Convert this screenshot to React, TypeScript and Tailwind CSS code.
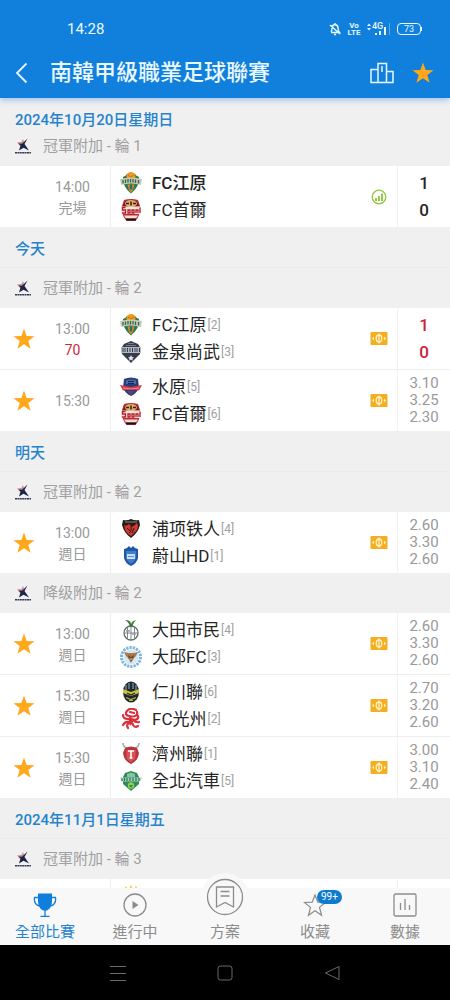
import type { ReactNode } from 'react'
import { useState } from 'react'
import clsx from 'clsx'

type CrestId =
  | 'gangwon'
  | 'seoul'
  | 'gimcheon'
  | 'suwon'
  | 'pohang'
  | 'ulsan'
  | 'daejeon'
  | 'daegu'
  | 'incheon'
  | 'gwangju'
  | 'jeju'
  | 'jeonbuk'
  | 'stars'

interface Team {
  crest: CrestId
  name?: string
  rank?: number
  winner?: boolean
}

interface Match {
  id: number
  time?: string
  status?: string
  live?: boolean
  starred?: boolean
  indicator?: 'stats' | 'odds'
  teams: Team[]
  score?: number[]
  odds?: string[]
}

interface Group {
  date?: string
  league: string
  collapsed?: boolean
  matches: Match[]
}

const groups: Group[] = [
  {
    date: '2024年10月20日星期日',
    league: '冠軍附加 - 輪 1',
    collapsed: true,
    matches: [
      {
        id: 1,
        time: '14:00',
        status: '完場',
        indicator: 'stats',
        teams: [
          { crest: 'gangwon', name: 'FC江原', winner: true },
          { crest: 'seoul', name: 'FC首爾' },
        ],
        score: [1, 0],
      },
    ],
  },
  {
    date: '今天',
    league: '冠軍附加 - 輪 2',
    matches: [
      {
        id: 2,
        time: '13:00',
        status: '70',
        live: true,
        starred: true,
        indicator: 'odds',
        teams: [
          { crest: 'gangwon', name: 'FC江原', rank: 2 },
          { crest: 'gimcheon', name: '金泉尚武', rank: 3 },
        ],
        score: [1, 0],
      },
      {
        id: 3,
        time: '15:30',
        starred: true,
        indicator: 'odds',
        teams: [
          { crest: 'suwon', name: '水原', rank: 5 },
          { crest: 'seoul', name: 'FC首爾', rank: 6 },
        ],
        odds: ['3.10', '3.25', '2.30'],
      },
    ],
  },
  {
    date: '明天',
    league: '冠軍附加 - 輪 2',
    matches: [
      {
        id: 4,
        time: '13:00',
        status: '週日',
        starred: true,
        indicator: 'odds',
        teams: [
          { crest: 'pohang', name: '浦项铁人', rank: 4 },
          { crest: 'ulsan', name: '蔚山HD', rank: 1 },
        ],
        odds: ['2.60', '3.30', '2.60'],
      },
    ],
  },
  {
    league: '降级附加 - 輪 2',
    matches: [
      {
        id: 5,
        time: '13:00',
        status: '週日',
        starred: true,
        indicator: 'odds',
        teams: [
          { crest: 'daejeon', name: '大田市民', rank: 4 },
          { crest: 'daegu', name: '大邱FC', rank: 3 },
        ],
        odds: ['2.60', '3.30', '2.60'],
      },
      {
        id: 6,
        time: '15:30',
        status: '週日',
        starred: true,
        indicator: 'odds',
        teams: [
          { crest: 'incheon', name: '仁川聯', rank: 6 },
          { crest: 'gwangju', name: 'FC光州', rank: 2 },
        ],
        odds: ['2.70', '3.20', '2.60'],
      },
      {
        id: 7,
        time: '15:30',
        status: '週日',
        starred: true,
        indicator: 'odds',
        teams: [
          { crest: 'jeju', name: '濟州聯', rank: 1 },
          { crest: 'jeonbuk', name: '全北汽車', rank: 5 },
        ],
        odds: ['3.00', '3.10', '2.40'],
      },
    ],
  },
  {
    date: '2024年11月1日星期五',
    league: '冠軍附加 - 輪 3',
    matches: [{ id: 8, teams: [{ crest: 'stars' }] }],
  },
]

const crests: Record<CrestId, ReactNode> = {
  gangwon: (
    <>
      <path d="M3 5 Q6 4 7 2 Q11 0 15 2 Q16 4 19 5 Q20 14 11 21.500 Q2 14 3 5Z" fill="#2c7a4b" />
      <circle cx="11" cy="4.500" r="4.500" fill="#f29a1f" />
      <path d="M8 3 L11 5 L14 3 M11 5 V8" stroke="#b96a12" strokeWidth=".8" fill="none" />
      <path d="M0 7 Q11 4 22 7 L21 13 Q11 10 1 13Z" fill="#c3cdb6" />
      <path d="M3 8v3.500M5.500 7.500v3.500M8 7v3.500M10.500 7v3.500M13 7v3.500M15.500 7.500v3.500M18.500 8v3.500" stroke="#33664b" strokeWidth="1.300" />
      <path d="M7.500 12.500h7l-1.500 5.500-2 2.500-2-2.500Z" fill="#e08b2a" />
      <path d="M11 12.500v5" stroke="#2c6a6b" strokeWidth="2.500" />
    </>
  ),
  seoul: (
    <>
      <path d="M4 1 Q11 -1 18 1 L20 7 L20 13 Q18 20 15 22 H7 Q4 20 2 13 L2 7Z" fill="#c22a33" />
      <path d="M3 7Q4 1 11 1T19 7Z" fill="#5b2a1c" />
      <ellipse cx="11" cy="4.500" rx="6" ry="3.500" fill="#dcae68" />
      <path d="M6 4.500h3M13 4.500h3M11 2.500v4" stroke="#3a1c12" strokeWidth="1.500" />
      <path d="M1 7.500H21V15H1Z" fill="#f6e0d9" />
      <path d="M5.500 8.500h-3v2.500h3V14H2M8 11h2v3H8zM12 11h2v3h-2zM16 14v-3h2v3M20 8.500V14" stroke="#b3202c" strokeWidth="1.300" fill="none" />
      <path d="M4 16.500H18L16 19.500H6Z" fill="#f2ded5" />
      <path d="M6 20.500H16" stroke="#1d1011" strokeWidth="2" />
    </>
  ),
  gimcheon: (
    <>
      <path d="M4 3 L11 0 L18 3 L20 6 V13 L11 22 L2 13 V6Z" fill="#363c4a" />
      <path d="M6 4.500h10M8 2.500h6" stroke="#767e8c" strokeWidth="1" />
      <path d="M1 6H21V12H1Z" fill="#b3b9c2" />
      <path d="M3 7v4M5 7v4M7.500 7v4M10 7v4M12.500 7v4M15 7v4M17 7v4M19.500 7v4" stroke="#363c4a" strokeWidth="1" />
      <path d="M11 14l1 2 2 .3-1.500 1.500.4 2-1.900-1-1.900 1 .4-2L8 16.300l2-.3Z" fill="#dfe3e8" />
    </>
  ),
  suwon: (
    <>
      <path d="M4 3 Q11 0 18 3 L19 12 Q16 18 11 20 Q6 18 3 12Z" fill="#263f78" />
      <path d="M6 4.500Q11 2.500 16 4.500V8H6Z" fill="#4c6aa5" />
      <path d="M8 5.500h6M8 7.500h6" stroke="#172750" strokeWidth="1" />
      <path d="M0 9 L11 11 L22 9 L19 14.500 L11 13.500 L3 14.500Z" fill="#d7374c" />
      <path d="M3 12l8 1 8-1" stroke="#f6a4ad" strokeWidth=".8" fill="none" />
      <path d="M7 15h8l-4 4Z" fill="#6d3f66" />
    </>
  ),
  pohang: (
    <>
      <path d="M3 2 Q7 3 11 1 Q15 3 19 2 L20 7 Q18 15 11 20 Q4 15 2 7Z" fill="#241d1d" />
      <path d="M4 7 Q6 9 9 6 L12 9 L17 5 Q19 8 17 12 L11 18 Q5 15 4 7Z" fill="#d8372c" />
      <path d="M15 7Q10 6 11 10T9 15M7 10l3 3M14 10l-2 5" stroke="#241d1d" strokeWidth="1" fill="none" />
      <path d="M5 4h12" stroke="#a98" strokeWidth=".9" />
    </>
  ),
  ulsan: (
    <>
      <path d="M4 4 L7 3 L9 1 L11 3 L13 1 L15 3 L18 4 V13 Q17 18 11 21 Q5 18 4 13Z" fill="#2257a7" />
      <path d="M6 6H16V13Q15 16 11 19Q7 16 6 13Z" fill="#3f7ecb" />
      <path d="M7 9h8v5H7Z" fill="#c9dcf1" />
      <path d="M8 11.500h6" stroke="#5f90cd" strokeWidth="1" />
    </>
  ),
  daejeon: (
    <>
      <circle cx="11" cy="14" r="7" fill="#fff" stroke="#5d6f6a" strokeWidth="1.300" />
      <path d="M4.500 14h13M11 7v14M7.500 8.500v11M14.500 8.500v11" stroke="#6b7f86" strokeWidth=".9" />
      <path d="M6 12h4M12 15h4" stroke="#b98ea5" strokeWidth="1.500" />
      <path d="M10 8 Q9 3 5 1 Q11 1 11 5 Q12 2 16 1 Q13 4 12 8Z" fill="#3f7a34" />
    </>
  ),
  daegu: (
    <>
      <circle cx="11" cy="11" r="9.500" fill="none" stroke="#7fb4dc" strokeWidth="3" strokeDasharray="2.300 1" />
      <circle cx="11" cy="11" r="7.500" fill="#d3e7f4" />
      <path d="M4 6 L8 7 H14 L18 6 L16 10 L14 12 L11 17 L8 12 L6 10Z" fill="#a67a4c" />
      <path d="M8 9l3 2 3-2-1 4-2 2-2-2Z" fill="#6a4c31" />
      <path d="M9.500 13h3" stroke="#e8d4ae" strokeWidth="1" />
    </>
  ),
  incheon: (
    <>
      <ellipse cx="11" cy="11" rx="8" ry="10.500" fill="#23282a" />
      <path d="M6 4v5M9 2v6M13 2v6M16 4v5" stroke="#70a2b5" strokeWidth="1.200" />
      <path d="M3 8 L11 11 L19 8 V12 L11 15 L3 12Z" fill="#c9c43b" />
      <path d="M7 12l4 2 4-2" stroke="#23282a" strokeWidth="1.200" fill="none" />
      <path d="M6 16.500l5 2 5-2M9 19.500h4" stroke="#aeb546" strokeWidth="1.200" fill="none" />
    </>
  ),
  gwangju: (
    <>
      <path
        d="M16 2Q10-1 7 3Q4 7 9 8T15 8Q18 7 17 4M3 7Q3 11 8 11T15 12Q19 11 18 8M3 17Q5 13 9 14T13 17Q15 20 18 18M8 20Q6 17 9 15M19 14Q16 15 13 12M10 4l4 1"
        fill="none"
        stroke="#d9303c"
        strokeWidth="2.200"
        strokeLinecap="round"
      />
      <path d="M9 8Q13 9 13 14L10 18Q8 13 9 8Z" fill="#d9303c" />
    </>
  ),
  jeju: (
    <>
      <path d="M3 0 Q3 4 7 5 M19 0 Q19 4 15 5" stroke="#a7a9a9" strokeWidth="1.600" fill="none" />
      <path d="M5 5 Q11 2 17 5 L19 10 Q18 18 11 21 Q4 18 3 10Z" fill="#b9353b" />
      <path d="M6 7 H16 L15 16 L11 19 L7 16Z" fill="#d75357" />
      <path d="M8 8h6M11 8v7M9.500 15h3" stroke="#fff" strokeWidth="1.600" />
    </>
  ),
  jeonbuk: (
    <>
      <path d="M5 3 L11 1 L17 3 L19 7 V14 L11 21 L3 14 V7Z" fill="#2d8c59" />
      <path d="M7 4l4-1.500L15 4v3H7Z" fill="#83c4a1" />
      <path d="M0 7.500H22L20 11.500H2Z" fill="#a9d0bb" />
      <path d="M2 8.500v2.500M4.500 8v3M7 8v3M10 8v3M13 8v3M16 8v3M19 8v3" stroke="#2d7a58" strokeWidth="1.300" />
      <circle cx="11" cy="15.500" r="3.200" fill="#8fce4d" />
      <path d="M9 15h4l-2 3Z" fill="#2d8c59" />
    </>
  ),
  stars: <path d="M5 4l1-2 1 2M10 3l1-2 1 2M15 4l1-2 1 2" stroke="#e9d45c" strokeWidth="1.200" fill="none" />,
}

function Crest({ id }: { id: CrestId }) {
  return (
    <svg viewBox="0 0 22 22" className="size-[22px] shrink-0" aria-hidden="true">
      {crests[id]}
    </svg>
  )
}

function StarIcon({ className }: { className?: string }) {
  return (
    <svg viewBox="0 0 20 20" className={className} aria-hidden="true">
      <path d="M10 0.500 L12.400 7.200 L19.600 7.400 L13.900 11.800 L16 18.800 L10 14.700 L4 18.800 L6.100 11.800 L0.400 7.400 L7.600 7.200Z" fill="currentColor" />
    </svg>
  )
}

function LeagueLogo() {
  return (
    <svg viewBox="0 0 16 16" className="size-4 shrink-0" aria-hidden="true">
      <path d="M2 4.500 L6.500 4 L8 1 L9 4 L7.500 7 L5 8Z" fill="#c4606b" opacity=".7" />
      <path d="M12.500 0.500 L9.500 6 L14 12.500 L8.500 9.800 L4 12.500 L5.500 7.500 L3.500 5.500 L7 5.800Z" fill="#1c2447" />
      <path d="M0 14.700H16" stroke="#323a5a" strokeWidth="1.400" strokeDasharray="2 .4" />
    </svg>
  )
}

function StatsIcon() {
  return (
    <svg viewBox="0 0 16 16" className="size-4" role="img" aria-label="統計">
      <circle cx="8" cy="8" r="6.800" fill="none" stroke="#92c83e" strokeWidth="1.300" />
      <path d="M5 12V9M8 12V7M11 12V4.500" stroke="#92c83e" strokeWidth="1.900" />
    </svg>
  )
}

function OddsIcon() {
  return (
    <svg viewBox="0 0 18 13" className="h-[13px] w-[18px]" role="img" aria-label="賠率">
      <rect x=".5" width="17" height="13" rx="1" fill="#f5ae1d" />
      <ellipse cx="9" cy="6.500" rx="2.800" ry="3.500" fill="none" stroke="#fff3cf" strokeWidth="1.300" />
      <path d="M9 1.500v10" stroke="#fff3cf" strokeWidth="1.200" />
      <path d="M4 4.500 L2 6.500 L4 8.500ZM14 4.500 L16 6.500 L14 8.500Z" fill="#fff3cf" />
    </svg>
  )
}

function StatusBar() {
  return (
    <div className="flex h-12 items-center justify-between pt-2.5 pr-7 pl-[67px]">
      <span className="text-[15px] leading-5">14:28</span>
      <div className="flex items-center gap-1.5">
        <svg viewBox="0 0 12 14" className="h-3.5 w-3" fill="none" stroke="currentColor" strokeWidth="1.400" aria-hidden="true">
          <path d="M2 10 Q3 9 3 6 Q3 3 6 2.500 Q9 3 9 6 Q9 9 10.500 10.500 H2M6 1v1.500M5 12.500h2M1 3l10 9" />
        </svg>
        <span className="flex w-3.5 flex-col items-center text-[8px] leading-[7px] font-bold">
          <span>Vo</span>
          <span>LTE</span>
        </span>
        <svg viewBox="0 0 24 14" className="h-3.5 w-6" fill="currentColor" aria-hidden="true">
          <path d="M0 4l2-2.500L4 4ZM0 6h4L2 8.500Z" />
          <text x="5" y="7" className="text-[9px] font-medium">4G</text>
          <path d="M8 11h2v2H8zM12 9h2v4h-2zM17 5h2v8h-2z" />
          <path d="M22 1h1v12h-1z" opacity=".35" />
        </svg>
        <span className="flex items-center">
          <span className="flex h-3 w-6 items-center justify-center rounded border border-current text-[9px] leading-3">73</span>
          <span className="h-1 w-px bg-current" />
        </span>
      </div>
    </div>
  )
}

function Header() {
  return (
    <header className="relative z-10 bg-[#1180dd] text-[#e9f7ff] shadow-[0_2px_6px_#1180dd66]">
      <StatusBar />
      <div className="flex h-[50px] items-center pr-4 pl-3.5">
        <button type="button" aria-label="返回" className="w-9">
          <svg viewBox="0 0 14 22" className="h-[22px] w-3.5" fill="none" stroke="currentColor" strokeWidth="1.800">
            <path d="M12.500 1.500 L3 11 L12.500 20.500" />
          </svg>
        </button>
        <h1 className="flex-1 text-[22px] leading-7 font-medium">南韓甲級職業足球聯賽</h1>
        <button type="button" aria-label="積分榜" className="mr-[18px]">
          <svg viewBox="0 0 24 22" className="h-[22px] w-6" fill="none" stroke="currentColor" strokeWidth="1.500">
            <path d="M8 20.500V1.500h8.500v19M8 7.500H1v13h22V9.500h-6.500M12 4v6" />
          </svg>
        </button>
        <button type="button" aria-label="收藏聯賽" className="text-[#ffa71a]">
          <StarIcon className="size-[22px]" />
        </button>
      </div>
    </header>
  )
}

function MatchRow({ match }: { match: Match }) {
  const [starred, setStarred] = useState(match.starred)

  return (
    <li className="flex h-[62px] items-stretch bg-white last:h-[61px]">
      <div className="flex w-12 items-center justify-center">
        {starred !== undefined && (
          <button
            type="button"
            aria-label="收藏"
            aria-pressed={starred}
            onClick={() => setStarred(!starred)}
            className={starred ? 'text-[#ffa81c]' : 'text-[#cccccc]'}
          >
            <StarIcon className="size-[22px]" />
          </button>
        )}
      </div>
      <div className="flex w-[49px] flex-col items-center justify-center pt-0.5 text-[14px] leading-[21px] text-[#999999]">
        <span>{match.time}</span>
        {match.status && <span className={clsx(match.live && 'text-[#d0283c]')}>{match.status}</span>}
      </div>
      <div className="ml-[13px] flex min-w-0 flex-1 flex-col gap-[5px] border-l border-[#eeeeee] pt-1.5 pl-[9px]">
        {match.teams.map((team) => (
          <div key={team.crest} className="flex h-[22px] items-center">
            <Crest id={team.crest} />
            <span className={clsx('ml-2.5 text-[17px] leading-[22px] whitespace-nowrap text-[#262626]', team.winner && 'font-medium')}>
              {team.name}
            </span>
            {team.rank && <span className="ml-px text-[12px] leading-4 text-[#a0a0a0]">[{team.rank}]</span>}
          </div>
        ))}
      </div>
      <div className="flex w-9 items-center justify-center">
        {match.indicator === 'stats' && <StatsIcon />}
        {match.indicator === 'odds' && <OddsIcon />}
      </div>
      <div className="flex w-[53px] flex-col items-center justify-center border-l border-[#f2f2f2]">
        {match.score?.map((goals, i) => (
          <span key={i} className={clsx('text-[17px] leading-[27px] font-medium', match.live ? 'text-[#c9243a]' : 'text-[#262626]')}>
            {goals}
          </span>
        ))}
        {match.odds?.map((odd, i) => (
          <span key={i} className="text-[15px] leading-[17px] text-[#999999]">
            {odd}
          </span>
        ))}
      </div>
    </li>
  )
}

function MatchGroup({ group }: { group: Group }) {
  return (
    <section>
      {group.date && (
        <h2
          className={clsx(
            'flex items-center px-[15px] text-[15px] leading-5 font-medium text-[#2583cd]',
            group.collapsed ? 'h-9 pt-2' : 'h-[41px] border-b border-[#ebebeb] pt-1',
          )}
        >
          {group.date}
        </h2>
      )}
      <h3
        className={clsx(
          'flex items-center gap-3 px-[15px] text-[15px] leading-5 text-[#a0a0a0]',
          group.collapsed ? 'h-8 pb-2' : 'h-10',
        )}
      >
        <LeagueLogo />
        {group.league}
      </h3>
      <ul className="divide-y divide-[#eeeeee]">
        {group.matches.map((match) => (
          <MatchRow key={match.id} match={match} />
        ))}
      </ul>
    </section>
  )
}

function NavItem({ label, active, children }: { label: string; active?: boolean; children: ReactNode }) {
  return (
    <li className="flex-1">
      <button
        type="button"
        aria-current={active ? 'page' : undefined}
        className={clsx(
          'flex w-full flex-col items-center text-[15px] leading-5 whitespace-nowrap',
          active ? 'text-[#2583cd]' : 'text-[#8c8c8c]',
        )}
      >
        <span className="relative flex h-[34px] items-center justify-center">{children}</span>
        {label}
      </button>
    </li>
  )
}

function BottomNav() {
  return (
    <nav className="relative z-10 h-[57px] bg-[#f8f8f9]">
      <ul className="flex">
        <NavItem label="全部比賽" active>
          <svg viewBox="0 0 24 24" className="size-6" aria-hidden="true">
            <path d="M5 0.500H19V8Q19 15 14 17.500H10Q5 15 5 8Z" fill="#0f7fdb" />
            <path d="M5 4.500H1.500Q.500 11.500 6.500 13M19 4.500h3.500q1 7-5 8.500M12 17v6M7.500 23.300h9" fill="none" stroke="#0f7fdb" strokeWidth="1.300" />
          </svg>
        </NavItem>
        <NavItem label="進行中">
          <svg viewBox="0 0 24 24" className="size-6" aria-hidden="true">
            <circle cx="12" cy="12" r="11" fill="none" stroke="currentColor" strokeWidth="1.300" />
            <path d="M9.500 8 L15.500 12 L9.500 16Z" fill="currentColor" />
          </svg>
        </NavItem>
        <NavItem label="方案">
          <span className="absolute -top-[15px] flex size-12 items-center justify-center rounded-full bg-[#f8f8f9]">
            <svg viewBox="0 0 38 38" className="size-[38px]" fill="none" stroke="currentColor" strokeWidth="1.300" aria-hidden="true">
              <circle cx="19" cy="19" r="17.500" />
              <path d="M10.500 9h17v20l-8.500-4.500L10.500 29ZM14.500 13.500h9M14.500 18h9" />
            </svg>
          </span>
        </NavItem>
        <NavItem label="收藏">
          <svg viewBox="0 0 24 24" className="size-6" fill="none" stroke="currentColor" strokeWidth="1.200" aria-hidden="true">
            <path d="M12 2 L14.800 9.200 L22.500 9.500 L16.500 14.400 L18.600 22.300 L12 17.800 L5.400 22.300 L7.500 14.400 L1.500 9.500 L9.200 9.200Z" />
          </svg>
          <span className="absolute top-0.5 left-3.5 rounded-full bg-[#0f7bd0] px-1 text-[10px] leading-[14px] text-white">99+</span>
        </NavItem>
        <NavItem label="數據">
          <svg viewBox="0 0 24 24" className="size-6" fill="none" stroke="currentColor" strokeWidth="1.300" aria-hidden="true">
            <rect x="1" y="1" width="22" height="22" rx="1.500" />
            <path d="M7.500 17V10M12 17V6M16.500 17v-5" />
          </svg>
        </NavItem>
      </ul>
    </nav>
  )
}

function SystemBar() {
  return (
    <footer className="flex h-[55px] items-center justify-center gap-[91px] bg-black text-[#6a6a6a]">
      <button type="button" aria-label="選單">
        <svg viewBox="0 0 16 16" className="size-4" stroke="currentColor" strokeWidth="1">
          <path d="M0 1.500h16M0 8.500h16M0 15.500h16" />
        </svg>
      </button>
      <button type="button" aria-label="主畫面">
        <svg viewBox="0 0 16 16" className="size-4" fill="none" stroke="currentColor" strokeWidth="1">
          <rect x="1" y="1" width="14" height="14" rx="2.500" />
        </svg>
      </button>
      <button type="button" aria-label="上一頁">
        <svg viewBox="0 0 16 16" className="size-4" fill="none" stroke="currentColor" strokeWidth="1" strokeLinejoin="round">
          <path d="M15 1.500v13L1.500 8Z" />
        </svg>
      </button>
    </footer>
  )
}

export default function App() {
  return (
    <div className="flex h-screen flex-col bg-[#f0f0f0] font-[Roboto,'Noto_Sans_CJK_TC',sans-serif]" lang="zh-Hant">
      <Header />
      <main className="min-h-0 flex-1 overflow-y-auto [scrollbar-width:none]">
        {groups.map((group, i) => (
          <MatchGroup key={i} group={group} />
        ))}
      </main>
      <BottomNav />
      <SystemBar />
    </div>
  )
}
